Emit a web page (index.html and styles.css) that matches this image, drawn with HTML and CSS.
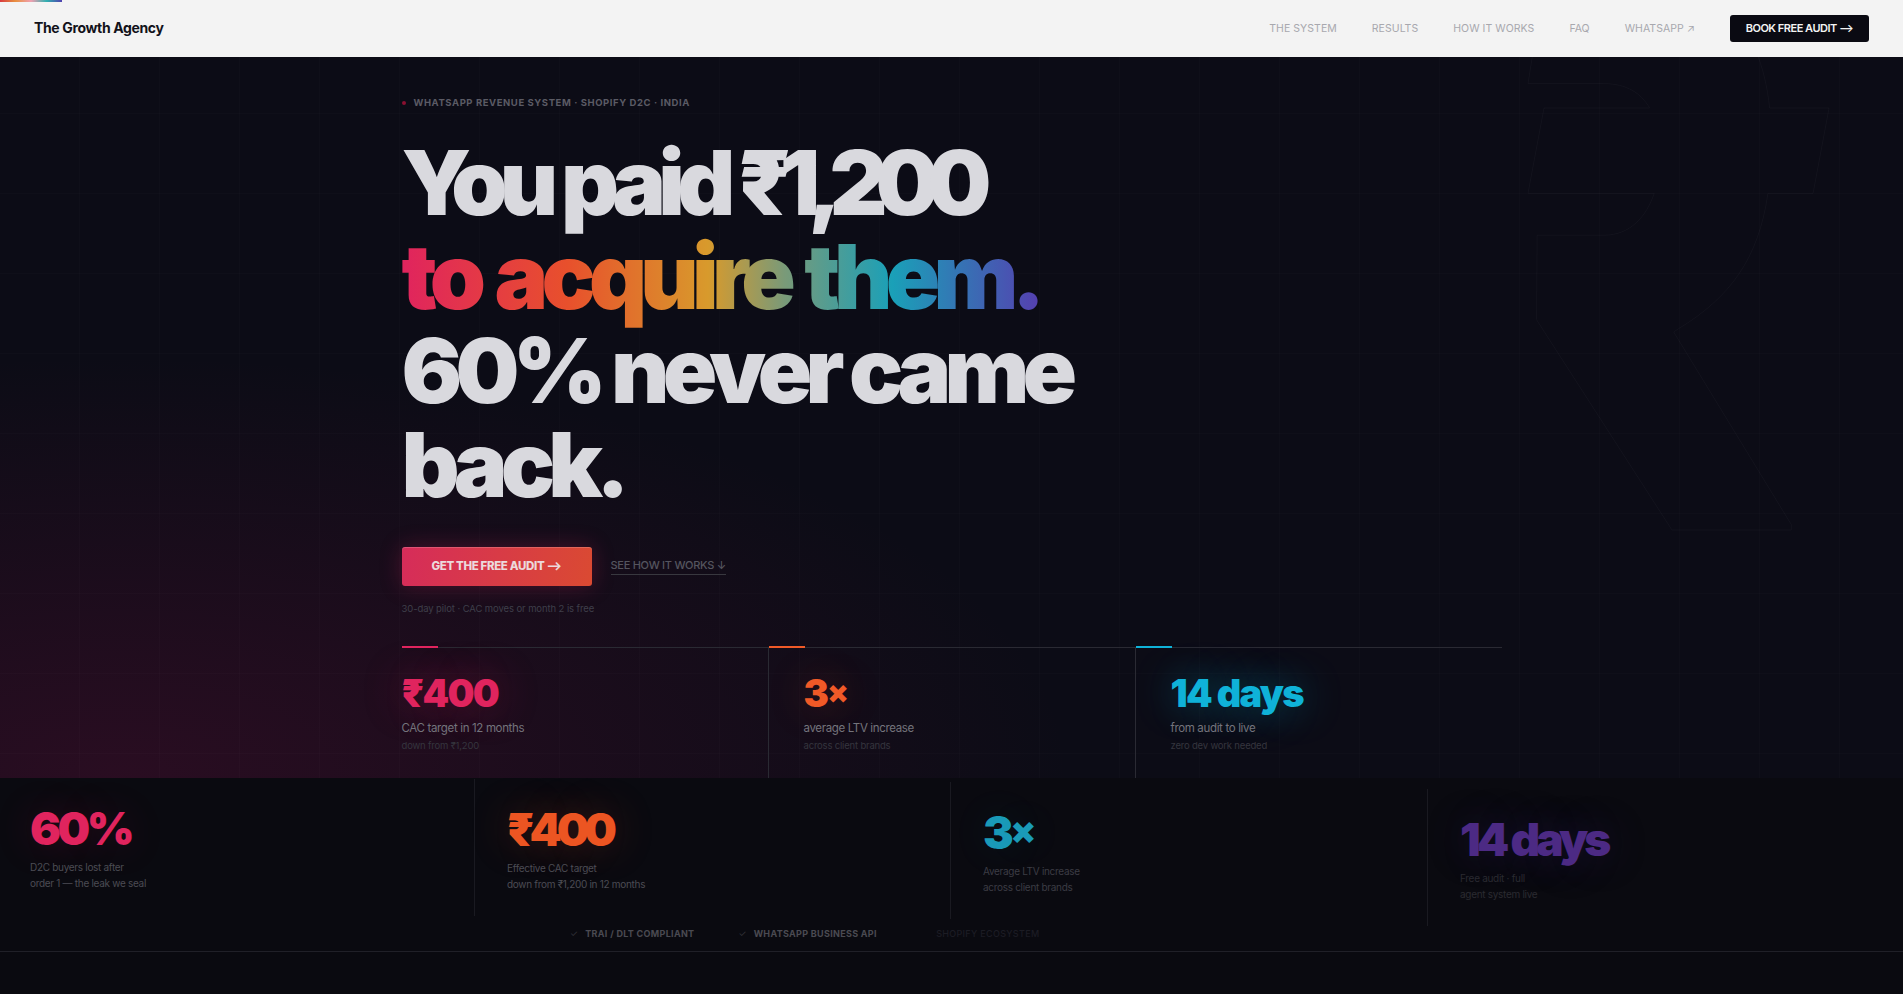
FILE: index.html
```html
<!DOCTYPE html>
<html>
<head>
    <meta charset="UTF-8">
    <meta name="viewport" content="width=device-width, initial-scale=1.0">
    <title>The Growth Agency</title>
    <link rel="stylesheet" href="styles.css">
</head>
<body>
    <div class="progress-bar"></div>

    <nav class="nav">
        <a class="logo" href="#">The Growth Agency</a>
        <div class="nav-links">
            <a href="#">The System</a>
            <a href="#">Results</a>
            <a href="#">How It Works</a>
            <a href="#">FAQ</a>
            <a href="#">WhatsApp ↗</a>
            <a class="nav-cta" href="#">Book Free Audit ⟶</a>
        </div>
    </nav>

    <section class="hero">
        <div class="hero-inner">
            <p class="eyebrow"><span class="eyebrow-dot"></span>WhatsApp Revenue System · Shopify D2C · India</p>
            <h1 class="headline">
                <span class="line-one">You paid <span class="tight">₹1,200</span></span><br>
                <span class="rainbow">to acquire them.</span><br>
                60% never came<br>
                back.
            </h1>
            <div class="cta-row">
                <a class="btn-primary" href="#">Get The Free Audit ⟶</a>
                <a class="btn-link" href="#">See How It Works ↓</a>
            </div>
            <p class="cta-note">30-day pilot · CAC moves or month 2 is free</p>

            <div class="stats">
                <div class="stat stat-pink">
                    <div class="stat-num">₹400</div>
                    <div class="stat-label">CAC target in 12 months</div>
                    <div class="stat-sub">down from ₹1,200</div>
                </div>
                <div class="stat stat-orange">
                    <div class="stat-num">3<span class="times">×</span></div>
                    <div class="stat-label">average LTV increase</div>
                    <div class="stat-sub">across client brands</div>
                </div>
                <div class="stat stat-cyan">
                    <div class="stat-num">14 days</div>
                    <div class="stat-label">from audit to live</div>
                    <div class="stat-sub">zero dev work needed</div>
                </div>
            </div>
        </div>
    </section>

    <section class="band">
        <div class="band-item band-one">
            <div class="band-num">60%</div>
            <p class="band-text">D2C buyers lost after<br>order 1 — the leak we seal</p>
        </div>
        <div class="band-item band-two">
            <div class="band-num">₹400</div>
            <p class="band-text">Effective CAC target<br>down from ₹1,200 in 12 months</p>
        </div>
        <div class="band-item band-three">
            <div class="band-num">3<span class="times">×</span></div>
            <p class="band-text">Average LTV increase<br>across client brands</p>
        </div>
        <div class="band-item band-four">
            <div class="band-num">14 days</div>
            <p class="band-text">Free audit · full<br>agent system live</p>
        </div>
    </section>

    <div class="trust">
        <span class="trust-item"><span class="tick">✓</span>TRAI / DLT Compliant</span>
        <span class="trust-item"><span class="tick">✓</span>WhatsApp Business API</span>
        <span class="trust-item trust-faded"><span class="tick">✓</span>Shopify Ecosystem</span>
    </div>
    <div class="page-rest"></div>
</body>
</html>
```

FILE: styles.css
```css
* {
    box-sizing: border-box;
}
html, body {
    margin: 0;
    padding: 0;
}
body {
    font-family: Inter, "Liberation Sans", "DejaVu Sans", sans-serif;
    background-color: #0a0a10;
    color: #d9d9de;
    height: 994px;
    overflow: hidden;
}
a {
    text-decoration: none;
    color: inherit;
}
p {
    margin: 0;
}
.progress-bar {
    position: fixed;
    top: 0;
    left: 0;
    width: 62px;
    height: 2px;
    background: linear-gradient(90deg, #d83a40, #e89040, #f0a0b0, #30b0b0, #5040b0);
}
.nav {
    height: 57px;
    background-color: #f3f3f3;
    display: flex;
    align-items: center;
    justify-content: space-between;
    padding: 0 34px;
}
.logo {
    font-size: 14px;
    font-weight: 700;
    letter-spacing: -0.025em;
    color: #12121a;
    padding-bottom: 2px;
}
.nav-links {
    display: flex;
    align-items: center;
    gap: 35px;
    font-size: 10.5px;
    letter-spacing: 0.005em;
    text-transform: uppercase;
    color: #a8a8ae;
}
.nav-links .nav-cta {
    background-color: #0a0a12;
    color: #f3f3f3;
    font-weight: 600;
    font-size: 11px;
    letter-spacing: -0.045em;
    text-align: center;
    width: 139px;
    height: 27px;
    line-height: 27px;
    border-radius: 3px;
}
.hero {
    position: relative;
    overflow: hidden;
    height: 721px;
    background-color: #0c0c16;
    background-image:
        linear-gradient(rgba(255, 255, 255, 0.012) 1px, transparent 1px),
        linear-gradient(90deg, rgba(255, 255, 255, 0.012) 1px, transparent 1px),
        radial-gradient(ellipse 950px 420px at 120px 720px, rgba(110, 15, 60, 0.3), transparent 100%);
    background-size: 80px 80px, 80px 80px, auto;
    background-position: 0 56px, 79px 0, 0 0;
    padding-top: 39px;
}
/* big rupee watermark behind the hero */
.hero::before {
    content: "₹";
    position: absolute;
    top: -201px;
    left: 1504px;
    font-size: 780px;
    line-height: 1;
    font-weight: 900;
    color: transparent;
    -webkit-text-stroke: 1px rgba(255, 255, 255, 0.04);
    transform: scaleX(0.75);
    transform-origin: left top;
}
.hero-inner {
    position: relative;
    width: 1100px;
    margin: 0 auto;
}
.eyebrow {
    display: flex;
    align-items: center;
    font-size: 9.5px;
    font-weight: 700;
    letter-spacing: 0.06em;
    text-transform: uppercase;
    color: #5b5b65;
    line-height: 14px;
}
.eyebrow-dot {
    width: 4px;
    height: 4px;
    border-radius: 50%;
    background-color: #8a1030;
    margin-right: 8px;
}
.headline {
    margin: 26px 0 0;
    font-size: 90px;
    line-height: 94px;
    font-weight: 900;
    letter-spacing: -0.075em;
    color: #d9d9de;
}
.line-one {
    letter-spacing: -0.085em;
}
.tight {
    letter-spacing: -0.135em;
}
.rainbow {
    background: linear-gradient(90deg, #e0245e 0%, #e8502c 26%, #d89a2c 48%, #7a9a78 60%, #1aa0b8 77%, #5540b0 100%);
    -webkit-background-clip: text;
    background-clip: text;
    color: transparent;
    word-spacing: 4px;
}
.cta-row {
    display: flex;
    align-items: center;
    margin-top: 35px;
}
.btn-primary {
    display: block;
    width: 190px;
    height: 39px;
    line-height: 39px;
    text-align: center;
    font-size: 11.5px;
    font-weight: 800;
    letter-spacing: -0.03em;
    text-transform: uppercase;
    color: #ecd9dc;
    background: linear-gradient(100deg, #d62c5a, #da4a32);
    border-radius: 3px;
    box-shadow: 0 0 22px rgba(224, 36, 94, 0.25), inset 0 1px 0 rgba(255, 255, 255, 0.18);
}
.btn-link {
    margin-left: 19px;
    font-size: 11px;
    font-weight: 500;
    letter-spacing: -0.025em;
    text-transform: uppercase;
    color: #55555f;
    border-bottom: 1px solid #38383f;
    padding-bottom: 2px;
}
.cta-note {
    margin-top: 16px;
    font-size: 9.5px;
    letter-spacing: -0.01em;
    line-height: 14px;
    color: #3f3f4a;
}
.stats {
    margin-top: 31px;
    display: grid;
    grid-template-columns: 366px 367px 367px;
    border-top: 1px solid #2a2a33;
    height: 131px;
}
.stat {
    position: relative;
    padding: 22px 0 0 35px;
    border-left: 1px solid #2a2a33;
}
.stat:first-child {
    padding-left: 0;
    border-left: none;
}
.stat::before {
    content: "";
    position: absolute;
    top: -2px;
    left: 0;
    width: 36px;
    height: 2px;
}
.stat-num {
    font-size: 38px;
    line-height: 46px;
    font-weight: 900;
    letter-spacing: -0.045em;
}
.times {
    font-size: 0.82em;
    line-height: 0;
    vertical-align: 0.14em;
}
.stat-label {
    margin-top: 3px;
    font-size: 11.5px;
    line-height: 18px;
    color: #74747c;
    letter-spacing: -0.03em;
}
.stat-sub {
    font-size: 9.5px;
    line-height: 18px;
    color: #35353e;
    letter-spacing: -0.02em;
}
.stat-pink .stat-num {
    color: #e0245e;
    text-shadow: 0 0 40px rgba(224, 36, 94, 0.35);
}
.stat-pink::before {
    background-color: #e0245e;
}
.stat-orange .stat-num {
    color: #f05a28;
    text-shadow: 0 0 40px rgba(240, 90, 40, 0.3);
}
.stat-orange::before {
    background-color: #f05a28;
}
.stat-cyan .stat-num {
    color: #0fb2d8;
    text-shadow: 0 0 40px rgba(15, 178, 216, 0.45);
}
.stat-cyan::before {
    background-color: #0fb2d8;
}
.band {
    display: grid;
    grid-template-columns: 474px 476px 477px 1fr;
    height: 142px;
    background-color: #0a0a10;
}
.band-item {
    height: 137px;
    padding: 25px 0 0 32px;
    border-left: 1px solid #1a1a21;
}
.band-item:first-child {
    border-left: none;
    padding-left: 30px;
}
.band-num {
    font-size: 46px;
    line-height: 50px;
    font-weight: 900;
    letter-spacing: -0.075em;
}
.band-text {
    margin-top: 6px;
    font-size: 10px;
    line-height: 16px;
    color: #4c4c54;
    letter-spacing: -0.03em;
}
.band-one .band-num {
    color: #e0245e;
    text-shadow: 0 0 40px rgba(224, 36, 94, 0.2);
}
.band-two {
    margin-top: 1px;
}
.band-two .band-num {
    color: #ec5522;
    letter-spacing: -0.11em;
    text-shadow: 0 0 40px rgba(240, 90, 40, 0.25);
}
.band-three {
    margin-top: 4px;
}
.band-three .band-num {
    color: #1a9ab8;
    text-shadow: 0 0 40px rgba(15, 178, 216, 0.12);
}
.band-three .band-text {
    color: #3c3c44;
}
.band-four {
    margin-top: 11px;
}
.band-four .band-num {
    color: #4c2a84;
    letter-spacing: -0.085em;
    text-shadow: 0 0 40px rgba(80, 50, 150, 0.25);
}
.band-four .band-text {
    color: #2a2a31;
}
.trust {
    height: 32px;
    display: flex;
    align-items: center;
    gap: 44px;
    padding: 0 0 5px 570px;
    font-size: 9px;
    font-weight: 700;
    letter-spacing: 0.035em;
    text-transform: uppercase;
    color: #4a4a52;
    border-bottom: 1px solid #202028;
}
.trust-item {
    display: flex;
    align-items: center;
}
.tick {
    margin-right: 7px;
    font-weight: 400;
    color: #33333a;
}
.trust-faded {
    color: #1c1c24;
    font-weight: 500;
}
.trust-faded .tick {
    color: transparent;
}
.page-rest {
    height: 40px;
    background-color: #0a0a10;
}
```
